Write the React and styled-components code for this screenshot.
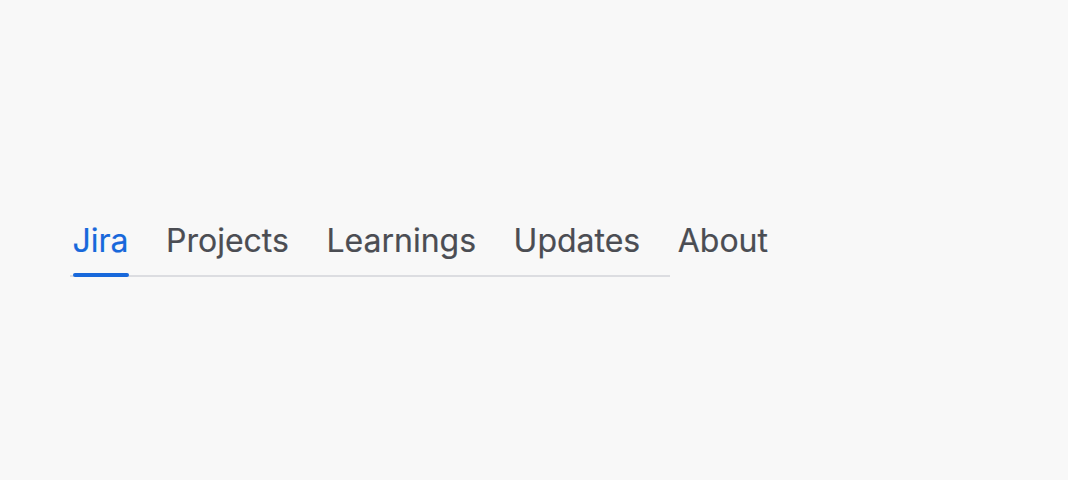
import React, { useState } from 'react'
import styled, { createGlobalStyle } from 'styled-components'

const GlobalStyle = createGlobalStyle`
  html, body {
    margin: 0;
    padding: 0;
    background: #f8f8f8;
    font-family: Inter, "Noto Sans", sans-serif;
  }
`

const Page = styled.div`
  display: flex;
  align-items: flex-start;
  padding: 222px 0 0 70px;
`

const TabList = styled.div`
  display: flex;
  gap: 37.5px;
  width: 600px;
  padding-left: 2.5px;
  box-sizing: border-box;
  border-bottom: 2px solid #dcdde1;
  white-space: nowrap;
`

const Tab = styled.button`
  position: relative;
  border: 0;
  background: none;
  padding: 0 0 15px;
  margin: 0;
  font-family: inherit;
  font-size: 32px;
  font-weight: 400;
  line-height: 38px;
  color: ${(p) => (p.$active ? '#1868db' : '#4b4d53')};
  -webkit-text-stroke: 0.2px currentColor;
  cursor: pointer;

  &::after {
    content: '';
    position: absolute;
    left: 0;
    right: 0;
    bottom: -2px;
    height: 4px;
    border-radius: 2px;
    background: ${(p) => (p.$active ? '#1868db' : 'transparent')};
  }
`

const tabs = ['Jira', 'Projects', 'Learnings', 'Updates', 'About']

export default function App() {
  const [active, setActive] = useState('Jira')
  return (
    <Page>
      <GlobalStyle />
      <TabList role="tablist">
        {tabs.map((t) => (
          <Tab key={t} $active={t === active} onClick={() => setActive(t)}>
            {t}
          </Tab>
        ))}
      </TabList>
    </Page>
  )
}
